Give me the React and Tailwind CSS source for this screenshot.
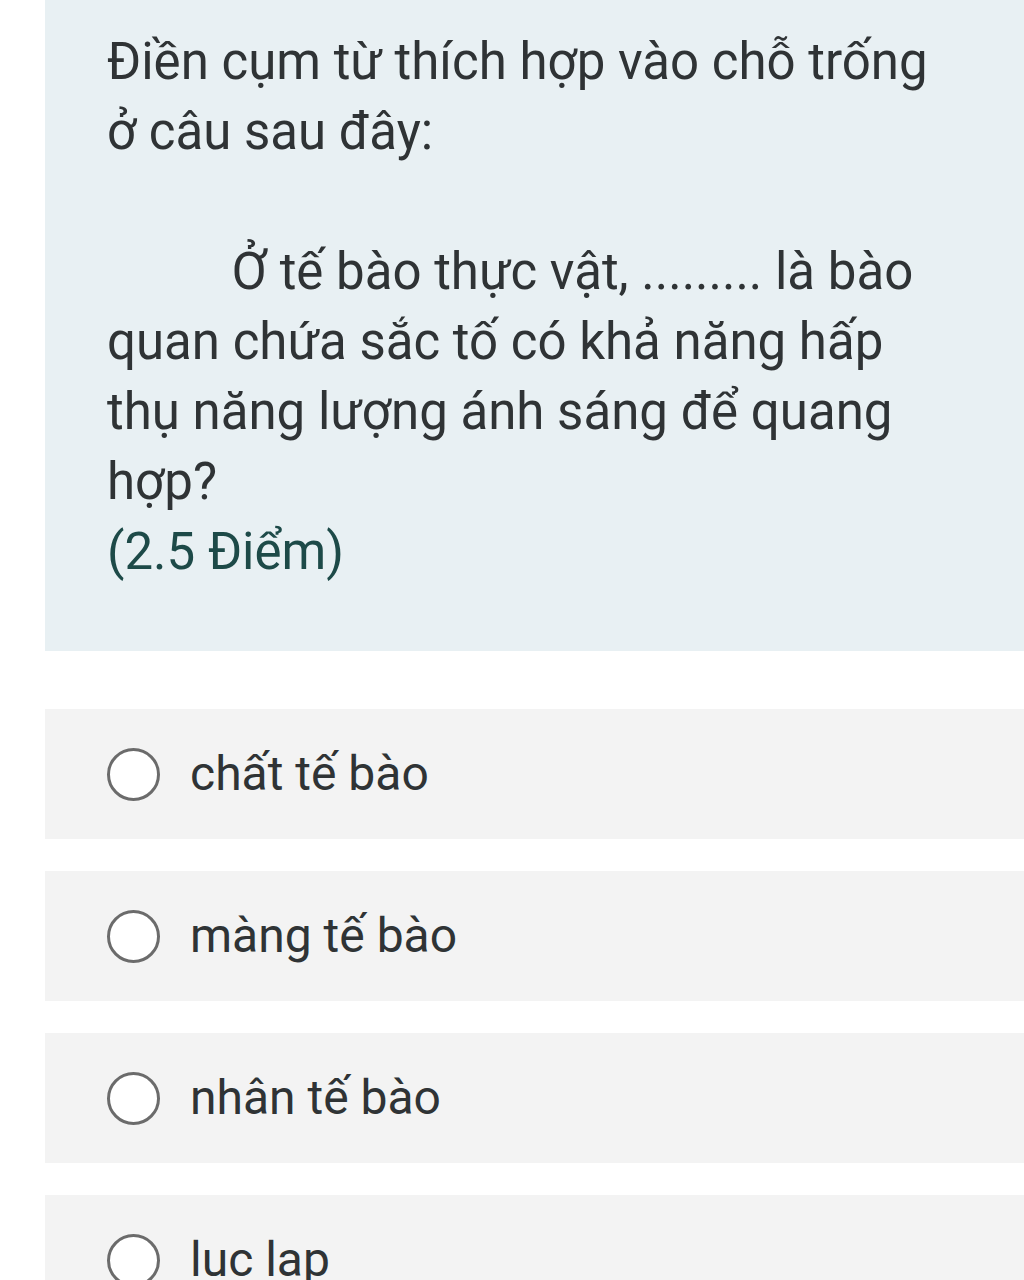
export default function App() {
  const options = ["chất tế bào", "màng tế bào", "nhân tế bào", "luc lap"];
  return (
    <div className="w-[1024px] h-[1280px] overflow-hidden bg-white" style={{ fontFamily: "Roboto, 'Noto Sans', sans-serif" }}>
      <div className="ml-[45px] bg-[#e8f0f3] pl-[62px] pr-[86px] pt-[27px] pb-[64px] text-[#2f3335] text-[51px] leading-[70px]">
        <p>Điền cụm từ thích hợp vào chỗ trống ở câu sau đây:</p>
        <p className="h-[70px]"></p>
        <p className="indent-[125px]">Ở tế bào thực vật, ......... là bào quan chứa sắc tố có khả năng hấp thụ năng lượng ánh sáng để quang hợp?</p>
        <p className="text-[#1d4a48]">(2.5 Điểm)</p>
      </div>
      <div className="mt-[58px] flex flex-col gap-[32px]">
        {options.map((o) => (
          <div key={o} className="ml-[45px] h-[130px] bg-[#f3f3f3] flex items-center pl-[62px]">
            <span className="w-[53px] h-[53px] rounded-full border-[3px] border-[#6b6b6b] bg-white shrink-0"></span>
            <span className="ml-[30px] text-[48px] text-[#2f3335] leading-none">{o}</span>
          </div>
        ))}
      </div>
    </div>
  );
}
